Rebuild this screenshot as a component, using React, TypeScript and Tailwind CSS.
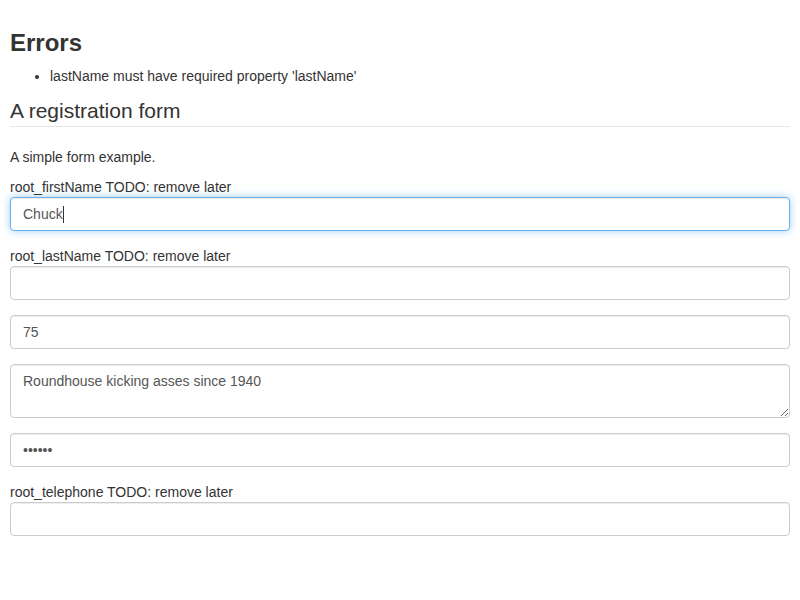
import React from "react";

const inputCls =
  "block w-full h-[34px] px-3 py-[6px] text-[14px] leading-[20px] text-[#555] bg-white border border-[#ccc] rounded-[4px] shadow-[inset_0_1px_1px_rgba(0,0,0,0.075)] outline-none";

export default function App() {
  return (
    <div
      className="min-h-[600px] bg-white px-[10px] pt-[10px] text-[14px] leading-[20px] text-[#333]"
      style={{ fontFamily: '"Liberation Sans", Arial, Helvetica, sans-serif' }}
    >
      <h3 className="mt-[20px] mb-[10px] text-[24px] leading-[26.4px] font-bold">Errors</h3>
      <ul className="mb-[10px] pl-[40px] list-disc">
        <li>lastName must have required property 'lastName'</li>
      </ul>
      <div className="mb-[20px] border-b border-[#e5e5e5] text-[21px] leading-[30px]">A registration form</div>
      <p className="mb-[10px]">A simple form example.</p>

      <div className="mb-[15px]">
        <label className="block">root_firstName TODO: remove later</label>
        <div className="flex items-center h-[34px] px-3 text-[14px] text-[#555] bg-white border border-[#66afe9] rounded-[4px] shadow-[inset_0_1px_1px_rgba(0,0,0,0.075),0_0_8px_rgba(102,175,233,0.6)]">
          <span>Chuck</span>
          <span className="inline-block w-px h-[17px] bg-[#333]" />
        </div>
      </div>

      <div className="mb-[15px]">
        <label className="block">root_lastName TODO: remove later</label>
        <input className={inputCls} type="text" defaultValue="" />
      </div>

      <div className="mb-[15px]">
        <input className={inputCls} type="text" defaultValue="75" />
      </div>

      <div className="mb-[15px]">
        <textarea
          className="block w-full h-[54px] px-3 py-[6px] text-[14px] leading-[20px] text-[#555] bg-white border border-[#ccc] rounded-[4px] shadow-[inset_0_1px_1px_rgba(0,0,0,0.075)] outline-none resize-y"
          defaultValue="Roundhouse kicking asses since 1940"
          style={{ fontFamily: '"Liberation Sans", Arial, sans-serif' }}
        />
      </div>

      <div className="mb-[15px]">
        <input className={inputCls} type="text" readOnly value={"\u2022\u2022\u2022\u2022\u2022\u2022"} />
      </div>

      <div className="mb-[15px]">
        <label className="block">root_telephone TODO: remove later</label>
        <input className={inputCls} type="tel" defaultValue="" />
      </div>
    </div>
  );
}
